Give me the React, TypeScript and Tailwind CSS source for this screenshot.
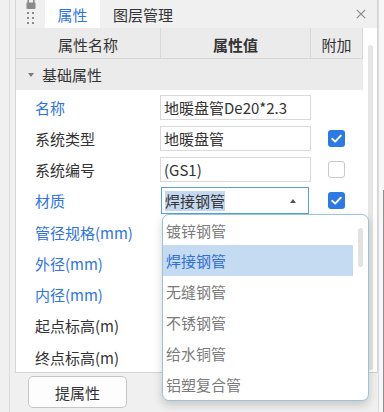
import React from "react";

type Row = {
  label: string;
  blue: boolean;
  value?: string;
  cb?: boolean | null;
  select?: boolean;
};

const rows: Row[] = [
  { label: "名称", blue: true, value: "地暖盘管De20*2.3", cb: null },
  { label: "系统类型", blue: false, value: "地暖盘管", cb: true },
  { label: "系统编号", blue: false, value: "(GS1)", cb: false },
  { label: "材质", blue: true, value: "焊接钢管", cb: true, select: true },
  { label: "管径规格(mm)", blue: true },
  { label: "外径(mm)", blue: true },
  { label: "内径(mm)", blue: true },
  { label: "起点标高(m)", blue: false },
  { label: "终点标高(m)", blue: false },
];

const options = ["镀锌钢管", "焊接钢管", "无缝钢管", "不锈钢管", "给水铜管", "铝塑复合管"];

function Checkbox({ checked }: { checked: boolean }) {
  if (checked) {
    return (
      <div className="w-[17px] h-[17px] rounded-[3px] bg-[#2a79e4] flex items-center justify-center">
        <svg width="17" height="17" viewBox="0 0 17 17">
          <path d="M4.2 8.8 L7.2 11.6 L12.8 5.6" fill="none" stroke="#fff" strokeWidth="1.9" strokeLinecap="round" strokeLinejoin="round" />
        </svg>
      </div>
    );
  }
  return <div className="w-[17px] h-[17px] rounded-[3px] bg-white border border-[#c9c9c9]" />;
}

export default function App() {
  return (
    <div className="relative w-[384px] h-[412px] overflow-hidden bg-[#f0f0f0] text-[15px] leading-none text-[#333] font-['Noto_Sans_CJK_SC','Noto_Sans',sans-serif] flex">
      {/* left gutter */}
      <div className="w-[10px] h-full border-r border-[#dcdcdc] bg-[#f0f0f0]" />

      {/* main column */}
      <div className="w-[368px] h-full flex flex-col">
        <div className="flex h-[373px]">
          <div className="w-[5px]" />
          <div className="w-[363px] h-full border-l border-r border-b border-[#d4d4d4] flex flex-col bg-white">
            {/* tab bar */}
            <div className="h-[28px] flex items-stretch bg-[#f0f0f0] shrink-0">
              <div className="w-[29px] flex flex-col items-center overflow-hidden">
                <svg width="12" height="12" viewBox="0 0 12 12" className="-mt-[3px] ml-[1px]">
                  <path d="M3.2 6 V4 a2.8 2.8 0 0 1 5.6 0 V6" fill="none" stroke="#8a8a8a" strokeWidth="1.6" />
                  <rect x="1.5" y="5.5" width="9" height="6.5" rx="1" fill="#8a8a8a" />
                </svg>
                <div className="mt-[3px] grid grid-cols-2 gap-x-[3px] gap-y-[3px]">
                  {Array.from({ length: 6 }).map((_, i) => (
                    <div key={i} className="w-[2px] h-[2px] bg-[#8a8a8a]" />
                  ))}
                </div>
              </div>
              <div className="w-[55px] bg-white flex items-center justify-center text-[#2f74e0]">属性</div>
              <div className="ml-[13px] flex items-center text-[#333]">图层管理</div>
              <div className="flex-1" />
              <div className="flex items-center mr-[11px]">
                <svg width="10" height="10" viewBox="0 0 10 10">
                  <path d="M0.8 0.8 L9.2 9.2 M9.2 0.8 L0.8 9.2" stroke="#8c8c8c" strokeWidth="1.2" />
                </svg>
              </div>
            </div>

            <div className="flex flex-1 min-h-0">
              {/* table */}
              <div className="w-[347px] flex flex-col overflow-hidden">
                {/* header */}
                <div className="h-[31px] shrink-0 flex bg-[#ebebeb] border-b border-[#d8d8d8] pt-[2px]">
                  <div className="w-[145px] border-r border-[#d8d8d8] flex items-center justify-center -mt-[2px] pt-[2px]">属性名称</div>
                  <div className="w-[150px] border-r border-[#d8d8d8] flex items-center justify-center font-bold -mt-[2px] pt-[2px]">属性值</div>
                  <div className="flex-1 border-r border-[#d8d8d8] flex items-center justify-center -mt-[2px] pt-[2px]">附加</div>
                </div>
                {/* section */}
                <div className="h-[31px] shrink-0 flex items-center bg-[#ebebeb]">
                  <svg width="6" height="4" viewBox="0 0 6 4" className="ml-[12px]">
                    <path d="M0 0 H6 L3 4 Z" fill="#7a7a7a" />
                  </svg>
                  <span className="ml-[8px]">基础属性</span>
                </div>
                {/* rows */}
                <div className="flex flex-col pt-[1.5px] bg-white">
                  {rows.map((r) => (
                    <div key={r.label} className="h-[31.25px] shrink-0 flex items-center">
                      <div className={`w-[144px] pl-[19px] whitespace-nowrap ${r.blue ? "text-[#2f74e0]" : "text-[#333]"}`}>
                        {r.label}
                      </div>
                      {r.select ? (
                        <>
                          <div className="w-[148px] h-[27px] ml-[1px] border border-[#58a2d9] bg-white flex items-center pl-[3px]">
                            <span className="bg-[#c4d8f0] h-[20px] flex items-center">{r.value}</span>
                            <svg width="6" height="4" viewBox="0 0 6 4" className="ml-auto mr-[12px]">
                              <path d="M0 4 H6 L3 0 Z" fill="#555" />
                            </svg>
                          </div>
                          <div className="ml-[19px]">
                            <Checkbox checked={true} />
                          </div>
                        </>
                      ) : r.value !== undefined ? (
                        <>
                          <div className="w-[151px] h-[25px] border border-[#d9d9d9] bg-white flex items-center pl-[3px] whitespace-nowrap">
                            {r.value}
                          </div>
                          {r.cb !== null && r.cb !== undefined ? (
                            <div className="ml-[17px]">
                              <Checkbox checked={r.cb} />
                            </div>
                          ) : null}
                        </>
                      ) : null}
                    </div>
                  ))}
                </div>
              </div>
              {/* right scrollbar */}
              <div className="flex-1 flex justify-center pt-[17px] pb-[2px]">
                <div className="w-[5px] h-full rounded-full bg-[#e6e6e6]" />
              </div>
            </div>
          </div>
        </div>
        {/* bottom bar */}
        <div className="flex-1 flex items-start pt-[3px] pl-[18px]">
          <button className="w-[99px] h-[32px] rounded-[5px] border border-[#c6c6c6] bg-[#fdfdfd] text-[15px] text-[#333] flex items-center justify-center">
            提属性
          </button>
        </div>
      </div>

      {/* right strip */}
      <div className="w-[6px] h-full border-l border-[#dadada] bg-[#f7f7f7] flex justify-end">
        <div className="flex flex-col w-[1px] h-full">
          <div className="h-[190px]" />
          <div className="flex-1 bg-[#8f8f8f]" />
        </div>
      </div>

      {/* dropdown overlay */}
      <div className="absolute left-[162px] top-[214px] w-[207px] h-[187px] bg-white border border-[#9cc3d6] rounded-[7px] shadow-[0_4px_10px_rgba(0,0,0,0.18)] flex overflow-hidden">
        <div className="w-[190px] flex flex-col">
          {options.map((o, i) => (
            <div
              key={o}
              className={`${i === 0 ? "h-[30px]" : "h-[31px]"} flex items-center pl-[3px] whitespace-nowrap ${
                i === 1 ? "bg-[#c5dbf1] text-[#2f6fd6]" : "text-[#7b7b7b]"
              }`}
            >
              {o}
            </div>
          ))}
        </div>
        <div className="flex-1 flex justify-center">
          <div className="w-[5px] h-[39px] mt-[13px] rounded-full bg-[#e2e2e2]" />
        </div>
      </div>
    </div>
  );
}
